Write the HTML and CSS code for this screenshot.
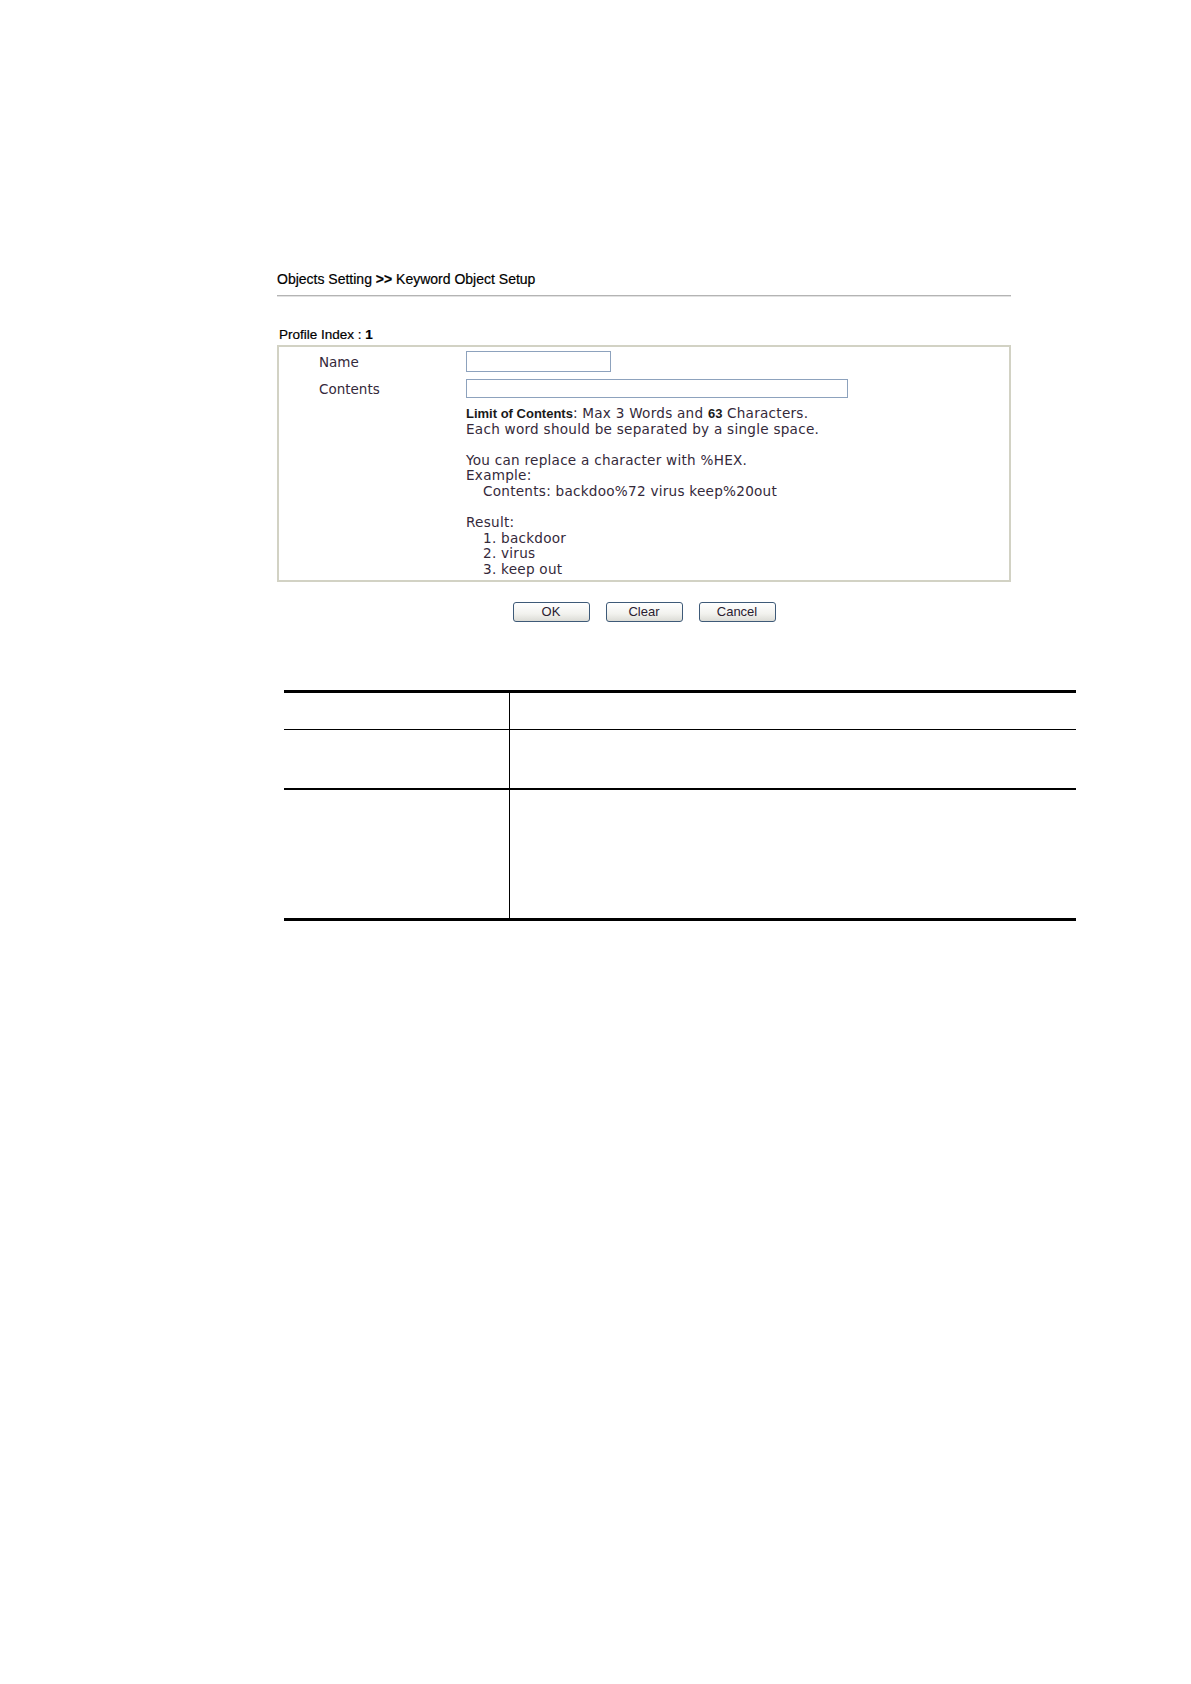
FILE: index.html
```html
<!DOCTYPE html>
<html>
<head>
<meta charset="utf-8">
<title>Keyword Object Setup</title>
<link rel="stylesheet" href="styles.css">
</head>
<body>
<div class="page">
  <div class="panel">
    <div class="title">Objects Setting <b>&gt;&gt;</b> Keyword Object Setup</div>
    <div class="rule"></div>
    <div class="profile">Profile Index : <b>1</b></div>
    <div class="box">
      <div class="row">
        <div class="label label-name">Name</div>
        <div class="field"><span class="input input-name"></span></div>
      </div>
      <div class="row row-contents">
        <div class="label">Contents</div>
        <div class="field">
          <span class="input input-contents"></span>
          <div class="help">
            <div><b class="strong">Limit of Contents</b>: Max 3 Words and <b class="strong">63</b> Characters.</div>
            <div>Each word should be separated by a single space.</div>
            <div class="blank"></div>
            <div>You can replace a character with %HEX.</div>
            <div>Example:</div>
            <div class="indent">Contents: backdoo%72 virus keep%20out</div>
            <div class="blank"></div>
            <div>Result:</div>
            <div class="indent">1. backdoor</div>
            <div class="indent">2. virus</div>
            <div class="indent">3. keep out</div>
          </div>
        </div>
      </div>
    </div>
    <div class="buttons">
      <span class="btn">OK</span>
      <span class="btn">Clear</span>
      <span class="btn">Cancel</span>
    </div>
  </div>
  <div class="doc-table">
    <div class="trow trow-1"><div class="c1"></div><div class="c2"></div></div>
    <div class="trow trow-2"><div class="c1"></div><div class="c2"></div></div>
    <div class="trow trow-3"><div class="c1"></div><div class="c2"></div></div>
  </div>
</div>
</body>
</html>
```
FILE: styles.css
```css
html, body {
  margin: 0;
  padding: 0;
  background: #ffffff;
}
.page {
  width: 1191px;
  padding-top: 271px;
  box-sizing: border-box;
}
.panel {
  margin-left: 277px;
  width: 734px;
}
.title {
  font-family: "Liberation Sans", Arial, sans-serif;
  font-size: 14px;
  line-height: 16px;
  height: 16px;
  color: #000;
  white-space: nowrap;
  -webkit-text-stroke: 0.2px #000;
}
.title b {
  font-weight: bold;
}
.rule {
  margin-top: 8px;
  height: 0;
  border-top: 1px solid #b4b4b4;
  border-bottom: 1px solid #e2e2e2;
}
.profile {
  margin-top: 30px;
  padding-left: 2px;
  font-family: "Liberation Sans", Arial, sans-serif;
  font-size: 13.5px;
  line-height: 16px;
  height: 16px;
  color: #000;
  -webkit-text-stroke: 0.2px #000;
}
.box {
  margin-top: 2px;
  border: 2px solid #d2d2c4;
  padding: 4px 0 2px 40px;
  font-family: "DejaVu Sans", Verdana, sans-serif;
  color: #34293a;
}
.row {
  display: grid;
  grid-template-columns: 147px 1fr;
  align-items: start;
}
.row-contents {
  margin-top: 7px;
}
.label {
  font-size: 13.5px;
  line-height: 20px;
}
.label-name {
  padding-top: 1px;
}
.input {
  display: block;
  box-sizing: border-box;
  border: 1px solid #8da2bd;
  background: #fff;
  height: 20px;
}
.input-name {
  width: 145px;
  height: 21px;
}
.input-contents {
  width: 382px;
  height: 19px;
}
.help {
  margin-top: 8px;
  font-size: 13.6px;
  line-height: 15.6px;
  letter-spacing: 0.25px;
}
.help .blank {
  height: 15.6px;
}
.help .indent {
  padding-left: 17px;
}
.strong {
  font-family: "Liberation Sans", Arial, sans-serif;
  font-weight: bold;
  font-size: 13px;
  letter-spacing: 0;
  color: #1a1a1a;
}
.buttons {
  margin-top: 20px;
  display: flex;
  justify-content: center;
  gap: 16px;
}
.btn {
  box-sizing: border-box;
  width: 77px;
  height: 20px;
  border: 1px solid #3e5a78;
  border-radius: 3px;
  background: linear-gradient(#ffffff, #f2f2ee 60%, #dcdcd6);
  font-family: "Liberation Sans", Arial, sans-serif;
  font-size: 13px;
  line-height: 18px;
  text-align: center;
  color: #2a2030;
}
.doc-table {
  margin-top: 68px;
  margin-left: 284px;
  width: 792px;
  border-top: 3px solid #000;
  border-bottom: 3px solid #000;
}
.trow {
  display: grid;
  grid-template-columns: 226px 1fr;
}
.trow .c1 {
  border-right: 1px solid #000;
}
.trow-1 {
  height: 36px;
  border-bottom: 1px solid #000;
}
.trow-2 {
  height: 58px;
  border-bottom: 2px solid #000;
}
.trow-3 {
  height: 128px;
}
```
